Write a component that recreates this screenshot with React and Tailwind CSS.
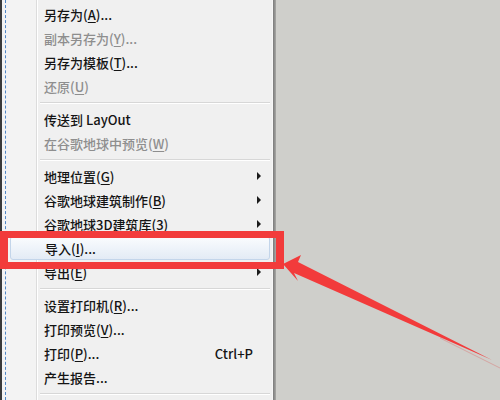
const font = { fontFamily: '"Noto Sans CJK SC", "Noto Sans", sans-serif' };

const items = [
  { label: '另存为', key: 'A', tail: '...' },
  { label: '副本另存为', key: 'Y', tail: '...', disabled: true },
  { label: '另存为模板', key: 'T', tail: '...' },
  { label: '还原', key: 'U', disabled: true },
  { sep: true },
  { label: '传送到 LayOut' },
  { label: '在谷歌地球中预览', key: 'W', disabled: true },
  { sep: true },
  { label: '地理位置', key: 'G', sub: true },
  { label: '谷歌地球建筑制作', key: 'B', sub: true },
  { label: '谷歌地球3D建筑库', key: '3', sub: true },
  { label: '导入', key: 'I', tail: '...', active: true },
  { label: '导出', key: 'E', sub: true },
  { sep: true },
  { label: '设置打印机', key: 'R', tail: '...' },
  { label: '打印预览', key: 'V', tail: '...' },
  { label: '打印', key: 'P', tail: '...', shortcut: 'Ctrl+P' },
  { label: '产生报告', tail: '...' },
  { sep: true },
];

function Row({ item }) {
  if (item.sep) {
    return (
      <div className="h-[9px] flex flex-col justify-center pl-[2px] pr-[2px]">
        <div className="h-px bg-[#d7d7d7]" />
        <div className="h-px bg-white" />
      </div>
    );
  }
  const color = item.disabled ? 'text-[#8e8e8e]' : 'text-[#141414]';
  const text = (
    <span className={`text-[13px] leading-none font-medium ${color}`}>
      {item.label}
      {item.key && (
        <>
          (<span className="underline underline-offset-2">{item.key}</span>)
        </>
      )}
      {item.tail}
    </span>
  );
  if (item.active) {
    return (
      <div className="relative h-[24px] -ml-[28px] mr-[2px] flex items-center pl-[34px] pr-[10px] rounded-[3px] border border-[#c3d5ea] bg-gradient-to-b from-[#fafcfe] to-[#e3ebf5]">
        {text}
      </div>
    );
  }
  return (
    <div className="h-[24px] flex items-center pl-[6px]">
      {text}
      {item.shortcut && (
        <span className="ml-auto pr-[19px] text-[13px] leading-none font-medium text-[#141414]">{item.shortcut}</span>
      )}
      {item.sub && (
        <span className="ml-auto mr-[11px] w-0 h-0 border-y-[4px] border-y-transparent border-l-[4px] border-l-[#1b1b1b]" />
      )}
    </div>
  );
}

export default function App() {
  return (
    <div className="relative w-[500px] h-[400px] overflow-hidden bg-[#cfcfcb] flex" style={font}>
      <div className="flex h-full">
        <div className="w-[2px] bg-[#3a3a3a]" />
        <div className="w-[35px] bg-[#f3f3f3] flex border-r border-[#dcdcdc]">
          <div className="ml-[3px] h-full border-l border-dashed border-[#4f86c6]" />
        </div>
        <div className="w-[235px] bg-[#f0f0f0] border-l border-white pt-[2px] flex flex-col">
          {items.map((it, i) => (
            <Row key={i} item={it} />
          ))}
        </div>
        <div className="w-px bg-[#f7f7f7]" />
        <div className="w-[3px] bg-gradient-to-r from-[#7a7a7a] to-[#a9a9a6]" />
      </div>

      <div className="absolute left-0 top-[231px] w-[284px] h-[38px] border-x-[8px] border-y-[7px] border-[#f23b3b]" />

      <svg className="absolute left-0 top-0" width="500" height="400" viewBox="0 0 500 400">
        <polygon
          points="283,264 301,255 298,262 492,360 294,273 298,281"
          fill="#f23b3b"
        />
        <line x1="440" y1="338" x2="500" y2="368" stroke="#e05a5a" strokeWidth="0.6" opacity="0.6" />
      </svg>
    </div>
  );
}
